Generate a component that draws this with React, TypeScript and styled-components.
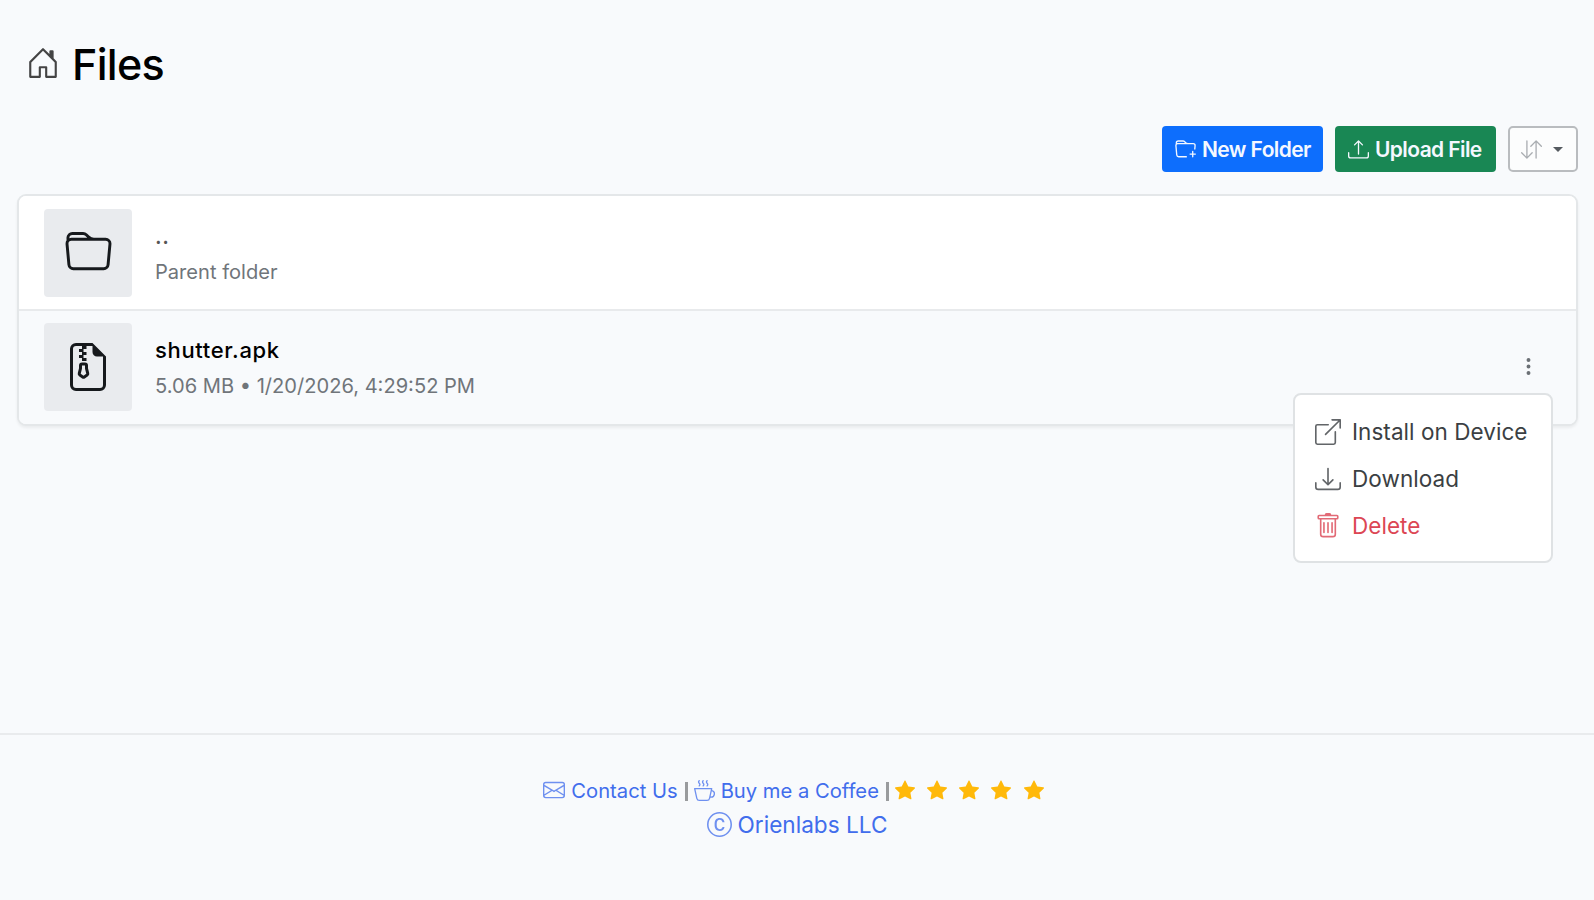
import React from "react";
import styled, { createGlobalStyle } from "styled-components";
import {
  BsArrowDownUp,
  BsBoxArrowUpRight,
  BsCCircle,
  BsCupHot,
  BsDownload,
  BsEnvelope,
  BsFileEarmarkZip,
  BsFolder,
  BsFolderPlus,
  BsHouseDoor,
  BsStarFill,
  BsThreeDotsVertical,
  BsTrash,
  BsUpload,
} from "react-icons/bs";

const GlobalStyle = createGlobalStyle`
  *, *::before, *::after { box-sizing: border-box; }
  body {
    margin: 0;
    background: #f8fafc;
    color: #000;
    font-family: Inter, "Liberation Sans", sans-serif;
    overflow: hidden;
  }
  svg { display: block; flex: none; }
`;

const Page = styled.div`
  height: 900px;
  display: flex;
  flex-direction: column;
`;

const Main = styled.main`
  height: 733px;
  padding: 36px 16px 0 17px;
`;

const Heading = styled.h1`
  margin: 0 0 34px 9px;
  height: 56px;
  display: flex;
  align-items: center;
  gap: 12px;
  font-size: 43px;
  font-weight: 500;
  letter-spacing: -0.7px;
  line-height: 56px;

  svg { margin-top: -2px; }
`;

const Toolbar = styled.div`
  display: flex;
  justify-content: flex-end;
  gap: 12px;
  height: 46px;
`;

const Button = styled.button<{ $bg: string; $width: number }>`
  display: flex;
  align-items: center;
  gap: 6px;
  width: ${(p) => p.$width}px;
  padding: 1px 0 0 13px;
  border: 0;
  border-radius: 4px;
  background: ${(p) => p.$bg};
  color: #f4f8ff;
  font: 600 21px/45px Inter, sans-serif;
  letter-spacing: -0.6px;
  white-space: nowrap;
`;

const SortButton = styled.button`
  display: flex;
  align-items: center;
  gap: 11px;
  width: 70px;
  padding: 0 0 0 11px;
  border: 2px solid #b9bcbf;
  border-radius: 5px;
  background: #fcfdfd;
  color: #a9adb1;
`;

const Caret = styled.span`
  border: 5px solid transparent;
  border-top-color: #555b60;
  border-bottom: 0;
`;

const Card = styled.section`
  margin-top: 22px;
  width: 1561px;
  height: 232px;
  border: 2px solid #e4e7e9;
  border-radius: 9px;
  background: #fff;
  box-shadow: 0 2px 3px rgba(0, 0, 0, 0.06);
`;

const Row = styled.div<{ $shaded?: boolean }>`
  position: relative;
  display: flex;
  align-items: center;
  gap: 24px;
  height: ${(p) => (p.$shaded ? 113 : 115)}px;
  padding: ${(p) => (p.$shaded ? "0 37px 2px 25px" : "0 37px 0 25px")};
  background: ${(p) => (p.$shaded ? "#f8fafc" : "#fff")};
  border-radius: ${(p) => (p.$shaded ? "0 0 7px 7px" : "7px 7px 0 0")};
  border-bottom: ${(p) => (p.$shaded ? 0 : "2px solid #e8eaec")};
`;

const Tile = styled.div`
  display: flex;
  align-items: center;
  justify-content: center;
  width: 88px;
  height: 88px;
  border-radius: 4px;
  background: #e9ebee;
  color: #16191c;
`;

const Details = styled.div`
  flex: 1;
  padding-top: 3px;
  margin-left: -1px;
`;

const Name = styled.div<{ $muted?: boolean }>`
  font-size: 22px;
  font-weight: 500;
  line-height: 36px;
  letter-spacing: 0.65px;
  color: ${(p) => (p.$muted ? "#555" : "#000")};
`;

const Meta = styled.div`
  font-size: 20.1px;
  line-height: 37px;
  color: #70757a;
`;

const Menu = styled.div`
  position: absolute;
  z-index: 1;
  top: 82px;
  right: 23px;
  width: 260px;
  height: 170px;
  padding: 13px 0 0 20px;
  border: 2px solid #dfe2e4;
  border-radius: 8px;
  background: #fff;
`;

const MenuItem = styled.div<{ $danger?: boolean }>`
  display: flex;
  align-items: center;
  gap: 11px;
  height: 47px;
  font-size: 22.5px;
  letter-spacing: 0.05px;
  white-space: nowrap;
  color: ${(p) => (p.$danger ? "#dc4654" : "#3b3f43")};

  svg { opacity: 0.8; }
`;

const Footer = styled.footer`
  flex: 1;
  display: flex;
  flex-direction: column;
  align-items: center;
  border-top: 2px solid #e9ebed;
  padding: 38px 0 0;
`;

const FooterLine = styled.div`
  display: flex;
  align-items: center;
  height: 34px;
  color: #777;
`;

const Link = styled.a<{ $size?: number }>`
  display: flex;
  align-items: center;
  gap: 6px;
  color: #416dec;
  font-size: ${(p) => p.$size ?? 20.2}px;
  white-space: nowrap;

  svg { opacity: 0.75; }
`;

const Divider = styled.span`
  width: 3px;
  height: 19px;
  margin: 2px 6px 0 7px;
  background: #999b9d;
`;

const Stars = styled.span`
  display: flex;
  gap: 12.2px;
  margin-right: 7px;
  color: #ffb90a;
`;

export default function App() {
  return (
    <Page>
      <GlobalStyle />
      <Main>
        <Heading>
          <BsHouseDoor size={34} color="#444" />
          Files
        </Heading>
        <Toolbar>
          <Button $bg="#0d6efd" $width={161}>
            <BsFolderPlus size={21} />
            New Folder
          </Button>
          <Button $bg="#198754" $width={161}>
            <BsUpload size={21} />
            Upload File
          </Button>
          <SortButton aria-label="Sort">
            <BsArrowDownUp size={21} />
            <Caret />
          </SortButton>
        </Toolbar>
        <Card>
          <Row>
            <Tile>
              <BsFolder size={47} />
            </Tile>
            <Details>
              <Name $muted>..</Name>
              <Meta>Parent folder</Meta>
            </Details>
          </Row>
          <Row $shaded>
            <Tile>
              <BsFileEarmarkZip size={48} />
            </Tile>
            <Details>
              <Name>shutter.apk</Name>
              <Meta>5.06 MB • 1/20/2026, 4:29:52 PM</Meta>
            </Details>
            <BsThreeDotsVertical size={21} color="#6b7075" />
            <Menu>
              <MenuItem>
                <BsBoxArrowUpRight size={26} />
                Install on Device
              </MenuItem>
              <MenuItem>
                <BsDownload size={26} />
                Download
              </MenuItem>
              <MenuItem $danger>
                <BsTrash size={26} />
                Delete
              </MenuItem>
            </Menu>
          </Row>
        </Card>
      </Main>
      <Footer>
        <FooterLine>
          <Link>
            <BsEnvelope size={22} />
            Contact Us
          </Link>
          <Divider />
          <Link>
            <BsCupHot size={21} />
            Buy me a Coffee
          </Link>
          <Divider />
          <Stars>
            {[1, 2, 3, 4, 5].map((n) => (
              <BsStarFill key={n} size={20} />
            ))}
          </Stars>
        </FooterLine>
        <FooterLine>
          <Link $size={22.6}>
            <BsCCircle size={25} />
            Orienlabs LLC
          </Link>
        </FooterLine>
      </Footer>
    </Page>
  );
}
